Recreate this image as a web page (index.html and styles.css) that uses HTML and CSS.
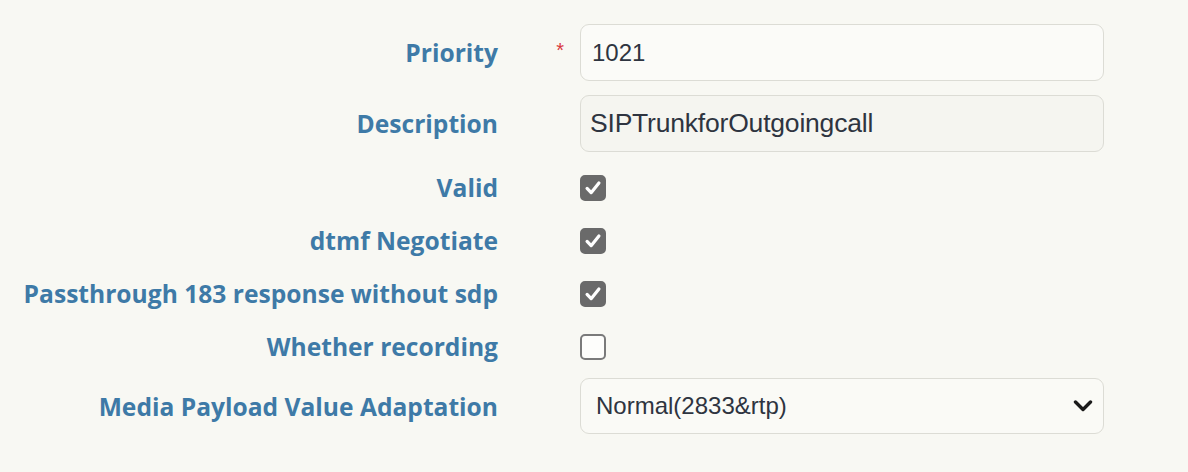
FILE: index.html
```html
<!DOCTYPE html>
<html>
<head>
<meta charset="utf-8">
<link rel="stylesheet" href="styles.css">
</head>
<body>
<div class="form">
  <div class="row row-input">
    <label class="lbl">Priority</label>
    <span class="req">*</span>
    <div class="ctl"><div class="field field-pri">1021</div></div>
  </div>
  <div class="row row-input">
    <label class="lbl">Description</label>
    <span class="req"></span>
    <div class="ctl"><div class="field field-alt">SIPTrunkforOutgoingcall</div></div>
  </div>
  <div class="row row-check">
    <label class="lbl">Valid</label>
    <span class="req"></span>
    <div class="ctl"><span class="cb on"><svg viewBox="0 0 26 26"><path d="M6 13.5 L10.8 18.5 L20 7" /></svg></span></div>
  </div>
  <div class="row row-check">
    <label class="lbl">dtmf Negotiate</label>
    <span class="req"></span>
    <div class="ctl"><span class="cb on"><svg viewBox="0 0 26 26"><path d="M6 13.5 L10.8 18.5 L20 7" /></svg></span></div>
  </div>
  <div class="row row-check">
    <label class="lbl">Passthrough 183 response without sdp</label>
    <span class="req"></span>
    <div class="ctl"><span class="cb on"><svg viewBox="0 0 26 26"><path d="M6 13.5 L10.8 18.5 L20 7" /></svg></span></div>
  </div>
  <div class="row row-check">
    <label class="lbl">Whether recording</label>
    <span class="req"></span>
    <div class="ctl"><span class="cb"></span></div>
  </div>
  <div class="row row-select">
    <label class="lbl">Media Payload Value Adaptation</label>
    <span class="req"></span>
    <div class="ctl">
      <div class="field select">
        <span>Normal(2833&amp;rtp)</span>
        <svg class="chev" viewBox="0 0 20 12"><path d="M2.5 2 L10 9.5 L17.5 2" /></svg>
      </div>
    </div>
  </div>
</div>
</body>
</html>
```

FILE: styles.css
```css
html, body {
  margin: 0;
  padding: 0;
  background: #f8f8f3;
}
.form {
  padding-top: 24px;
  width: 1188px;
}
.row {
  display: grid;
  grid-template-columns: 500px 80px 524px;
  align-items: center;
}
.row-input {
  height: 57px;
  margin-bottom: 14px;
}
.row-input + .row-check {
  margin-top: -5px;
}
.row-check {
  height: 53px;
}
.row-select {
  height: 56px;
  margin-top: 5px;
}
.lbl {
  font-family: "Open Sans", "DejaVu Sans", sans-serif;
  font-weight: 700;
  font-size: 24.6px;
  color: #3e7aa7;
  text-align: right;
  padding-right: 2px;
  white-space: nowrap;
}
.req {
  color: #d9383e;
  font-family: "Liberation Sans", sans-serif;
  font-size: 20px;
  text-align: right;
  padding-right: 16px;
  align-self: center;
  margin-top: -4px;
}
.field {
  box-sizing: border-box;
  height: 57px;
  border: 1.5px solid #dcdcd5;
  border-radius: 9px;
  background: #fbfbf8;
  font-family: "Liberation Sans", Arial, sans-serif;
  font-size: 21px;
  color: #2e3440;
  display: flex;
  align-items: center;
  padding-left: 12px;
}
.field-pri {
  font-size: 24px;
  padding-left: 11px;
}
.field-alt {
  background: #f5f5f0;
  padding-left: 9px;
  font-size: 26.5px;
  letter-spacing: -0.2px;
}
.select {
  height: 56px;
  justify-content: space-between;
  padding-left: 15px;
  padding-right: 10px;
  background: #fafaf6;
  font-size: 24px;
}
.chev {
  width: 20px;
  height: 12px;
  fill: none;
  stroke: #1a1a1a;
  stroke-width: 3.4;
  stroke-linecap: round;
  stroke-linejoin: round;
}
.cb {
  display: block;
  box-sizing: border-box;
  width: 26px;
  height: 26px;
  border-radius: 5px;
  border: 2px solid #7a7a7a;
  background: #fdfdfb;
}
.cb.on {
  background: #6a6a6a;
  border-color: #6a6a6a;
}
.cb svg {
  display: block;
  width: 22px;
  height: 22px;
  fill: none;
  stroke: #ffffff;
  stroke-width: 3.8;
  stroke-linecap: round;
  stroke-linejoin: round;
}
```
